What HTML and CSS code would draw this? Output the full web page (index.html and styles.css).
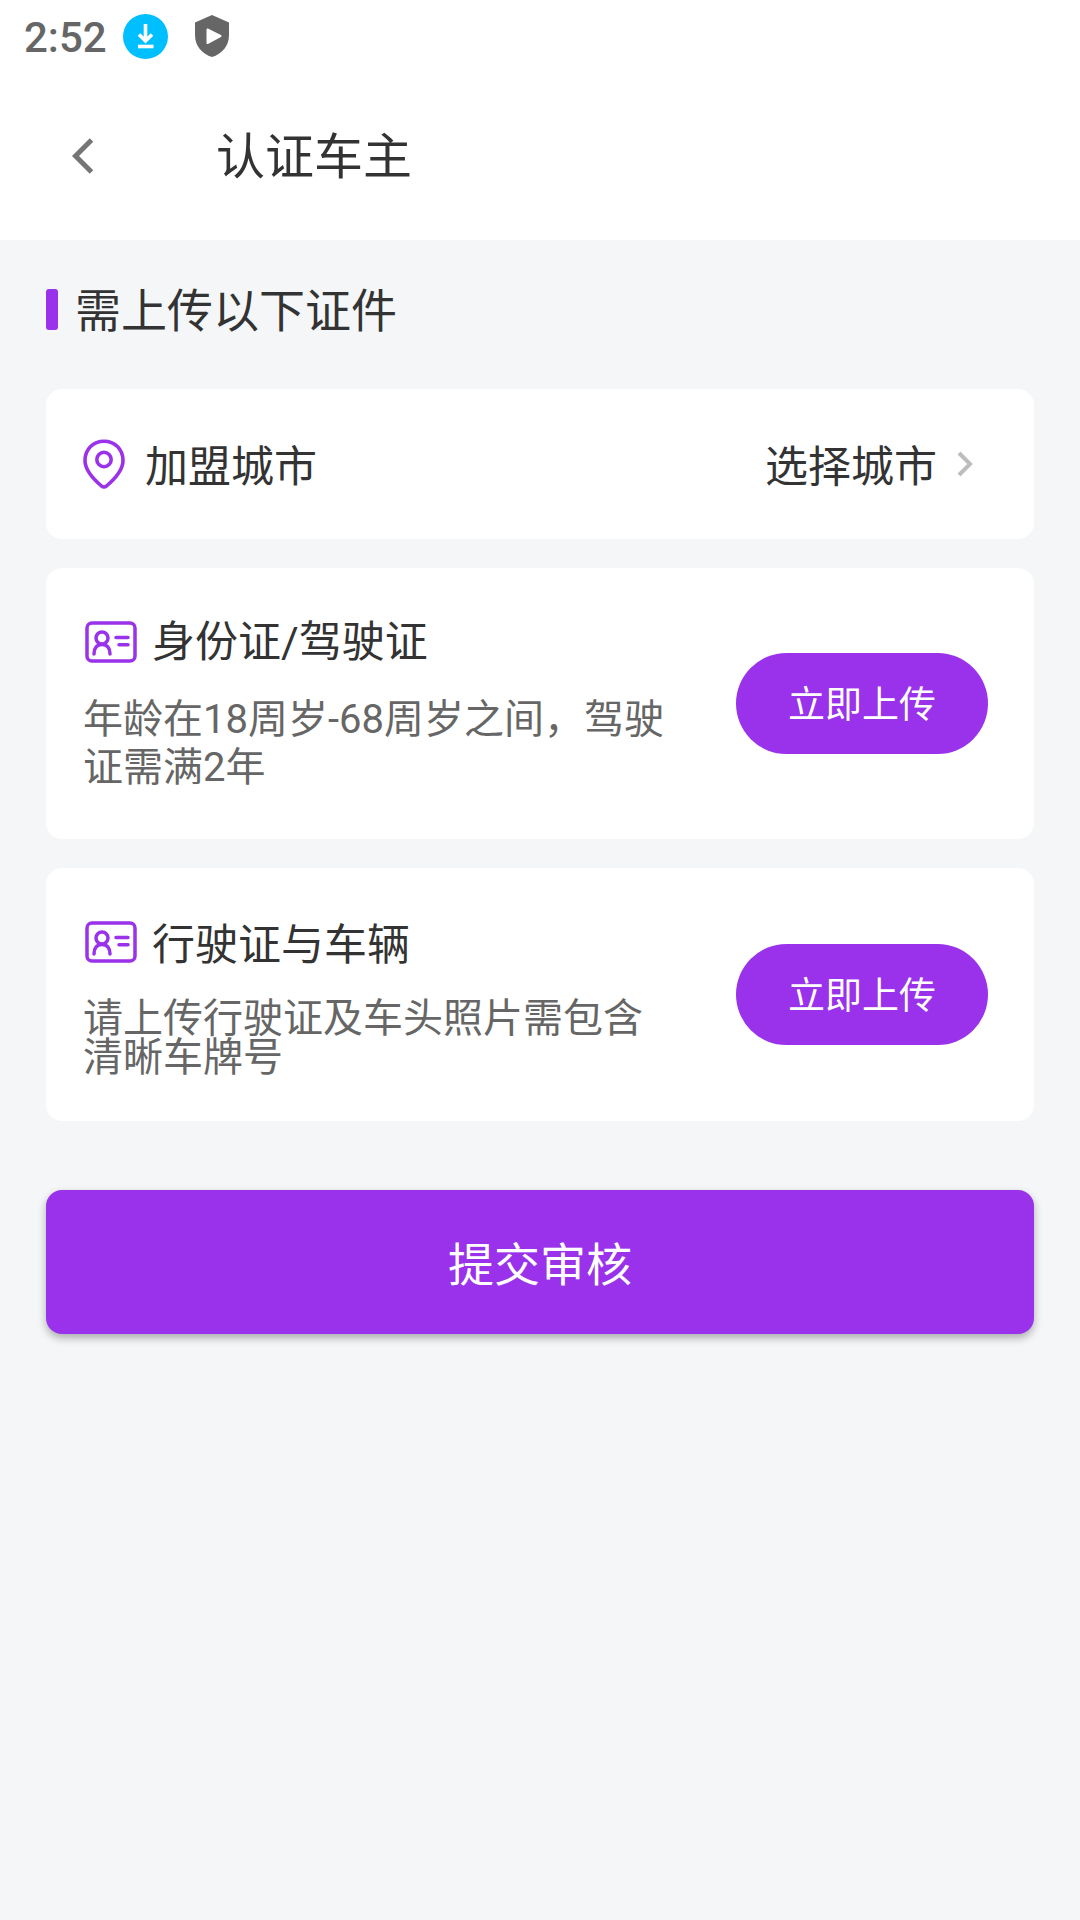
FILE: index.html
```html
<!DOCTYPE html>
<html lang="zh-CN">
<head>
  <meta charset="utf-8">
  <meta name="viewport" content="width=device-width, initial-scale=1">
  <title>认证车主</title>
  <link rel="stylesheet" href="styles.css">
</head>
<body>
  <svg class="sprite" aria-hidden="true">
    <symbol id="id-card" viewBox="0 0 52 42">
      <g fill="none" stroke="currentColor" stroke-width="3.500" stroke-linecap="round">
        <rect x="2" y="2" width="48" height="38" rx="5"/>
        <circle cx="17" cy="17" r="6"/>
        <path d="M9 33 C9 27 12 23.500 17 23.500 S25 27 25 33"/>
        <path d="M31 16.500 H43 M34 23.700 H43"/>
      </g>
    </symbol>
  </svg>

  <div class="status-bar">
    <span class="status-time">2:52</span>
    <svg class="status-download" viewBox="0 0 45 45" aria-hidden="true">
      <circle cx="22.500" cy="22.500" r="22.500" fill="#00bfff"/>
      <path d="M22.500 10 V27 M16 20.500 L22.500 27 L29 20.500" fill="none" stroke="#fff" stroke-width="3.600"/>
      <path d="M15 32.500 H30.500" stroke="#fff" stroke-width="3.600"/>
    </svg>
    <svg class="status-shield" viewBox="0 0 34 42" aria-hidden="true">
      <path d="M17 0 L34 7.500 V20 C34 31 27 39 17 42 C7 39 0 31 0 20 V7.500 Z" fill="#666"/>
      <path d="M12.500 14.500 L25.500 21 L12.500 28 Z" fill="#fff" stroke="#fff" stroke-width="2" stroke-linejoin="round"/>
    </svg>
  </div>

  <header class="app-bar">
    <button class="back" type="button" aria-label="返回">
      <svg viewBox="0 0 22 36" aria-hidden="true">
        <path d="M19.500 2 L3.500 18 L19.500 34" fill="none" stroke="#757575" stroke-width="5"/>
      </svg>
    </button>
    <h1 class="page-title">认证车主</h1>
  </header>

  <main class="content">
    <h2 class="section-title">需上传以下证件</h2>

    <button class="card city" type="button">
      <svg class="pin" viewBox="0 0 42 50" aria-hidden="true">
        <g fill="none" stroke="currentColor" stroke-width="3.600">
          <path d="M18.500 47 C12 41.500 2 31.500 2 21.500 C2 10 10.500 2.200 21 2.200 S40 10 40 21.500 C40 31.500 30 41.500 23.500 47 Q21 49 18.500 47 Z"/>
          <circle cx="21" cy="20.500" r="7.200"/>
        </g>
      </svg>
      <span class="label">加盟城市</span>
      <span class="label city-value">选择城市</span>
      <svg class="chevron" viewBox="0 0 16 26" aria-hidden="true">
        <path d="M2 2 L13 13 L2 24" fill="none" stroke="#bdbdbd" stroke-width="4"/>
      </svg>
    </button>

    <section class="card document">
      <div class="document-text">
        <h3 class="document-title">
          <svg class="id-icon" aria-hidden="true"><use href="#id-card"/></svg>
          <span class="label">身份证/驾驶证</span>
        </h3>
        <p class="description">年龄在18周岁-68周岁之间，驾驶证需满2年</p>
      </div>
      <button class="upload" type="button">立即上传</button>
    </section>

    <section class="card document compact">
      <div class="document-text">
        <h3 class="document-title">
          <svg class="id-icon" aria-hidden="true"><use href="#id-card"/></svg>
          <span class="label">行驶证与车辆</span>
        </h3>
        <p class="description">请上传行驶证及车头照片需包含清晰车牌号</p>
      </div>
      <button class="upload" type="button">立即上传</button>
    </section>

    <button class="submit" type="button">提交审核</button>
  </main>
</body>
</html>
```
FILE: styles.css
```css
:root {
  --purple: #9932ea;
  --ink: #333;
  --muted: #666;
  --page: #f4f6f8;
}

* {
  box-sizing: border-box;
}

body {
  margin: 0;
  min-height: 100vh;
  background: var(--page);
  color: var(--ink);
  font-family: Roboto, "Noto Sans CJK SC", sans-serif;
}

h1,
h2,
h3,
p {
  margin: 0;
  font-weight: 400;
}

button {
  margin: 0;
  border: 0;
  padding: 0;
  color: inherit;
  font: inherit;
  cursor: pointer;
}

svg {
  display: block;
  flex: none;
}

.sprite {
  position: absolute;
  width: 0;
  height: 0;
}

.status-bar {
  display: flex;
  align-items: center;
  height: 72px;
  padding: 0 24px;
  background: #fff;
}

.status-time {
  padding-top: 4px;
  color: var(--muted);
  font-size: 42px;
  font-weight: 500;
  line-height: 48px;
}

.status-download {
  width: 45px;
  height: 45px;
  margin-left: 16px;
}

.status-shield {
  width: 34px;
  height: 42px;
  margin-left: 27px;
}

.app-bar {
  display: flex;
  align-items: center;
  gap: 98px;
  height: 168px;
  padding: 0 48px;
  background: #fff;
}

.back {
  display: grid;
  place-items: center;
  width: 70px;
  height: 70px;
  background: none;
}

.back svg {
  width: 22px;
  height: 36px;
}

.page-title {
  padding-top: 4px;
  font-size: 49px;
  line-height: 64px;
}

.content {
  display: flex;
  flex-direction: column;
  padding: 35px 46px;
}

.section-title {
  display: flex;
  align-items: center;
  gap: 17px;
  margin-bottom: 46px;
  padding-top: 4px;
  font-size: 46px;
  line-height: 64px;
}

.section-title::before {
  content: "";
  width: 12px;
  height: 41px;
  margin-bottom: 4px;
  border-radius: 3px;
  background: var(--purple);
}

.card {
  display: flex;
  align-items: center;
  margin-bottom: 29px;
  border-radius: 16px;
  background: #fff;
}

.label {
  padding-top: 6px;
  font-size: 43px;
  line-height: 52px;
}

.city {
  height: 150px;
  padding: 0 61px 0 37px;
  text-align: left;
}

.pin {
  width: 42px;
  height: 50px;
  margin-right: 20px;
  color: var(--purple);
}

.city-value {
  margin-left: auto;
}

.chevron {
  width: 16px;
  height: 26px;
  margin-left: 20px;
}

.document {
  justify-content: space-between;
  gap: 60px;
  min-height: 271px;
  padding: 24px 46px 24px 37px;
}

.document-title {
  display: flex;
  align-items: center;
  gap: 15px;
  margin-bottom: 28px;
}

.document-title .label {
  padding-top: 0;
}

.id-icon {
  width: 52px;
  height: 42px;
  margin-left: 2px;
  color: var(--purple);
}

.description {
  color: var(--muted);
  font-size: 40px;
  line-height: 48px;
}

.compact {
  min-height: 253px;
}

.compact .label {
  padding-top: 6px;
}

.compact .description {
  line-height: 39px;
}

.upload {
  flex: none;
  width: 252px;
  height: 101px;
  padding-top: 4px;
  border-radius: 51px;
  background: var(--purple);
  color: #fff;
  font-size: 37px;
  line-height: 48px;
}

.submit {
  height: 144px;
  margin-top: 40px;
  padding-top: 6px;
  border-radius: 16px;
  background: var(--purple);
  box-shadow: 0 4px 8px rgba(0, 0, 0, 0.3);
  color: #fff;
  font-size: 46px;
  line-height: 64px;
}
```
